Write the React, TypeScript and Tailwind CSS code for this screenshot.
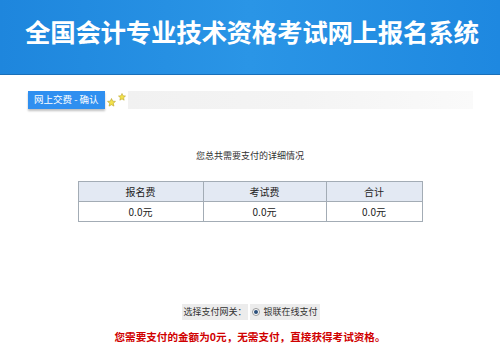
import React from "react";

const cn = '"Noto Sans CJK SC", "Liberation Sans", sans-serif';

function Star({ className }: { className?: string }) {
  return (
    <svg viewBox="0 0 10 10" className={className}>
      <path
        d="M5 0.6 L6.3 3.5 L9.4 3.8 L7 5.9 L7.7 9 L5 7.4 L2.3 9 L3 5.9 L0.6 3.8 L3.7 3.5 Z"
        fill="#f3e24a"
        stroke="#b9a22a"
        strokeWidth="0.7"
      />
    </svg>
  );
}

export default function App() {
  const fees = [
    { label: "报名费", value: "0.0元" },
    { label: "考试费", value: "0.0元" },
    { label: "合计", value: "0.0元" },
  ];
  return (
    <div className="w-[500px] h-[363px] bg-white overflow-hidden" style={{ fontFamily: cn }}>
      <header className="h-[75px] bg-gradient-to-r from-[#1e86dd] via-[#2a95e6] to-[#1e88e0] border-b border-[#1a6fb8] flex items-center">
        <h1 className="pl-[25px] text-white font-bold text-[25.5px] leading-none tracking-[-0.3px] pb-[12px]">
          全国会计专业技术资格考试网上报名系统
        </h1>
      </header>

      <div className="flex items-center pl-[28px] pr-[27px] mt-[16px]">
        <div className="bg-[#2f8ff0] text-white text-[9.5px] leading-none h-[18px] px-[6px] flex items-center shadow-[0_2px_2px_rgba(0,0,0,0.25)]">
          网上交费 - 确认
        </div>
        <Star className="w-[9px] h-[9px] ml-[2px] mt-[4px]" />
        <Star className="w-[8px] h-[8px] ml-[2px] -mt-[6px]" />
        <div className="flex-1 h-[18px] ml-[2px] bg-gradient-to-r from-[#f1f1f1] via-[#f4f4f4] to-[#fafafa]" />
      </div>

      <p className="text-center text-[9px] text-[#333] mt-[42px] leading-none">您总共需要支付的详细情况</p>

      <table className="mx-auto mt-[21px] w-[345px] border-collapse border border-[#a3acb5] text-[10px] text-[#222]">
        <thead>
          <tr className="bg-[#e3e9f3]">
            <th className="font-normal border border-[#a3acb5] w-[125px] h-[20px] p-0">报名费</th>
            <th className="font-normal border border-[#a3acb5] w-[123px] h-[20px] p-0">考试费</th>
            <th className="font-normal border border-[#a3acb5] h-[20px] p-0">合计</th>
          </tr>
        </thead>
        <tbody>
          <tr>
            {fees.map((f) => (
              <td key={f.label} className="text-center border border-[#a3acb5] h-[20px] p-0">
                {f.value}
              </td>
            ))}
          </tr>
        </tbody>
      </table>

      <div className="flex justify-center items-center mt-[82px] text-[9px] text-[#333] gap-[2px] ml-[2px]">
        <span className="bg-[#ececec] px-[1px] h-[16px] flex items-center">选择支付网关：</span>
        <span className="bg-[#ececec] px-[2px] h-[16px] flex items-center gap-[4px]">
          <span className="w-[8px] h-[8px] rounded-full border border-[#999] bg-white flex items-center justify-center">
            <span className="w-[4px] h-[4px] rounded-full bg-[#2a4f7a]" />
          </span>
          银联在线支付
        </span>
      </div>

      <p className="text-center text-[10.6px] font-bold text-[#d00000] mt-[12px] leading-none">
        您需要支付的金额为0元，无需支付，直接获得考试资格。
      </p>
    </div>
  );
}
